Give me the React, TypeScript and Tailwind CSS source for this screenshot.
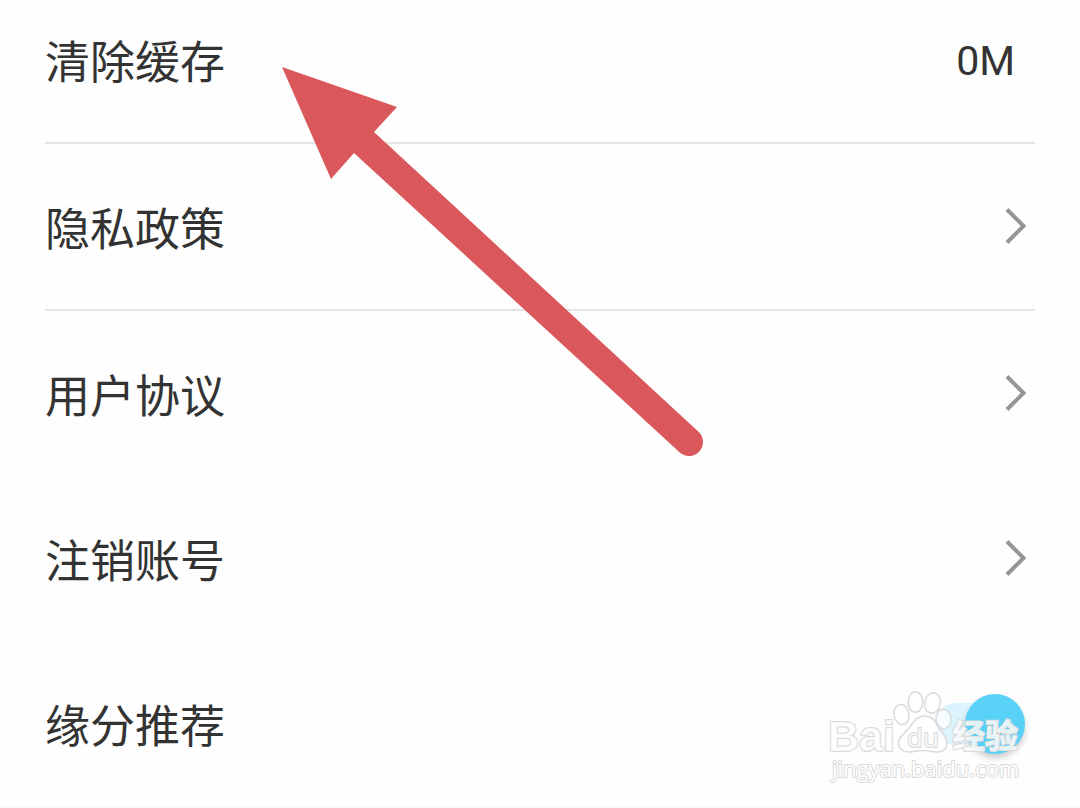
import { useState } from "react";

interface LinkRowProps {
  label: string;
  divider?: boolean;
}

const links: LinkRowProps[] = [
  { label: "隐私政策", divider: true },
  { label: "用户协议" },
  { label: "注销账号" },
];

function LinkRow({ label, divider }: LinkRowProps) {
  return (
    <li className={divider ? "border-b-2 border-[#e5e5e5]" : ""}>
      <a href="#" className="flex h-[165px] items-center justify-between pr-2">
        <span className="pt-2">{label}</span>
        <svg width="22" height="38" viewBox="0 0 22 38" fill="none" aria-hidden="true">
          <path d="M2 1.5 18.5 18 2 34.5" stroke="#959595" strokeWidth="4" />
        </svg>
      </a>
    </li>
  );
}

function PointerArrow() {
  return (
    <svg
      className="pointer-events-none absolute top-[60px] left-[270px]"
      width="440"
      height="405"
      viewBox="270 60 440 405"
      aria-hidden="true"
    >
      <path
        d="M282 67 397 107 374 132 698.5 431.7A14 14 0 0 1 679.5 452.3L354 153 331 179Z"
        fill="#da575c"
      />
    </svg>
  );
}

function Watermark() {
  return (
    <svg
      className="pointer-events-none absolute right-[50px] bottom-[18px] [paint-order:stroke]"
      width="210"
      height="103"
      viewBox="820 685 210 103"
      fill="#ffffff"
      fillOpacity="0.75"
      stroke="#dadada"
      strokeWidth="2"
      strokeLinejoin="round"
      role="img"
      aria-label="Baidu 经验"
    >
      <g strokeWidth="1.5" className="[paint-order:normal]">
        <ellipse cx="901.5" cy="714.5" rx="7.5" ry="10" transform="rotate(-10 901.5 714.5)" />
        <ellipse cx="915.5" cy="702" rx="7.3" ry="10.3" />
        <ellipse cx="932.5" cy="703" rx="7.8" ry="10.3" transform="rotate(12 932.5 703)" />
        <ellipse cx="943.5" cy="719" rx="7.5" ry="9.8" transform="rotate(-6 943.5 719)" />
        <path d="M925 716C916 716 913 723 909 728C904 734 898.5 737 898.5 743C898.5 749 903 752 909 752C914 752 918 750.5 923 750.5C928 750.5 931 752 937 752C944 752 947.5 748 947 742C946.500 736 942 733 939 728C936 723 933 716 925 716Z" />
      </g>
      <text x="828" y="751" fontFamily="'Liberation Sans', sans-serif" fontWeight="700" fontSize="43">
        Bai
      </text>
      <text x="907" y="747" fontFamily="'Open Sans', sans-serif" fontWeight="400" fontSize="26">
        du
      </text>
      <text x="952" y="748" fontFamily="'Noto Sans CJK SC', sans-serif" fontWeight="700" fontSize="33">
        经验
      </text>
      <text x="832" y="777" fontFamily="'Open Sans', sans-serif" fontWeight="400" fontSize="22" fillOpacity="1">
        jingyan.baidu.com
      </text>
    </svg>
  );
}

export default function App() {
  const [recommend, setRecommend] = useState(true);

  return (
    <main className="relative overflow-hidden border-b-2 border-[#f8f8f8] bg-[#fefefe] font-['Roboto','Noto_Sans_CJK_SC',sans-serif] text-[45px] leading-none text-[#333333]">
      <ul className="mx-[45px]">
        <li className="border-b-2 border-[#e5e5e5]">
          <button type="button" className="flex h-[142px] w-full items-center justify-between pr-5 pb-5">
            <span className="pt-1">清除缓存</span>
            <span className="text-[41px]">0M</span>
          </button>
        </li>
        {links.map((link) => (
          <LinkRow key={link.label} {...link} />
        ))}
        <li className="flex h-[165px] items-center justify-between pr-[10px]">
          <label htmlFor="recommend" className="pt-2">
            缘分推荐
          </label>
          <input
            id="recommend"
            type="checkbox"
            checked={recommend}
            onChange={(e) => setRecommend(e.target.checked)}
            className="flex h-[42px] w-[90px] appearance-none items-center rounded-full bg-gray-200 before:size-[60px] before:shrink-0 before:rounded-full before:bg-white before:shadow-[0_4px_6px_rgba(0,0,0,0.2)] checked:justify-end checked:bg-[#dcf4fd] checked:before:bg-[#5ad2f8]"
          />
        </li>
      </ul>
      <PointerArrow />
      <Watermark />
    </main>
  );
}
